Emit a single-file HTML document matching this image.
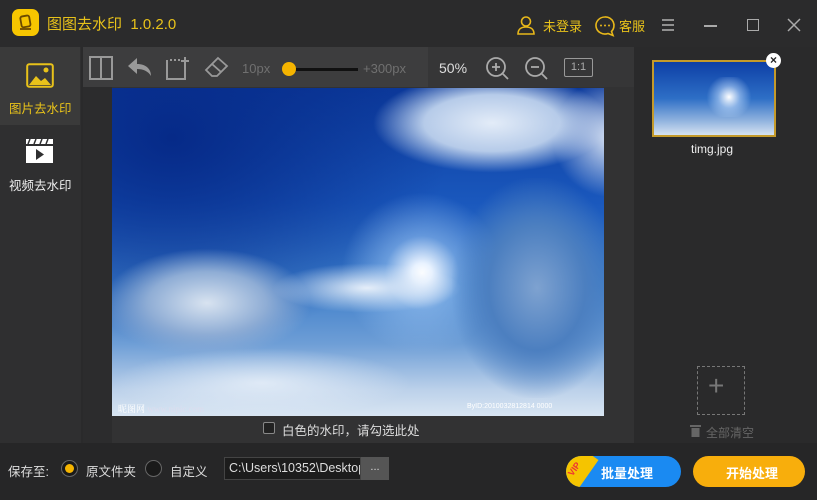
<!DOCTYPE html>
<html><head><meta charset="utf-8"><style>
*{margin:0;padding:0;box-sizing:border-box}
body{width:817px;height:500px;overflow:hidden;background:#2a2a2b;font-family:"Liberation Sans","Noto Sans CJK SC",sans-serif;position:relative;color:#ddd}
.abs{position:absolute}
.y{color:#e8c21a}
</style></head><body>
<div class="abs" style="left:0;top:0;width:817px;height:47px;background:#2b2b2c"></div>
<div class="abs" style="left:12px;top:9px;width:27px;height:27px;border-radius:7px;background:#f7c600"></div>
<svg class="abs" style="left:16px;top:13px" width="19" height="19"><rect x="5" y="3" width="9" height="11" rx="2" fill="none" stroke="#6b4a00" stroke-width="1.8" transform="rotate(-10 9 9)"/><line x1="4" y1="16" x2="15" y2="16" stroke="#6b4a00" stroke-width="1.8"/></svg>
<div class="abs y" style="left:47px;top:13px;font-size:15px">图图去水印&nbsp; 1.0.2.0</div>
<svg class="abs" style="left:516px;top:15px" width="20" height="20"><circle cx="10" cy="6.5" r="4.5" fill="none" stroke="#e8b81a" stroke-width="1.6"/><path d="M2 19c0-5 3.5-7 8-7s8 2 8 7z" fill="none" stroke="#e8b81a" stroke-width="1.6"/></svg>
<div class="abs y" style="left:543px;top:16px;font-size:13px">未登录</div>
<svg class="abs" style="left:594px;top:15px" width="22" height="22"><path d="M11 2a9 8.5 0 1 0 3 16.5l5 2-1.5-4A8.5 8.5 0 0 0 11 2z" fill="none" stroke="#e8b81a" stroke-width="1.6"/><circle cx="7" cy="10.5" r="1" fill="#e8b81a"/><circle cx="11" cy="10.5" r="1" fill="#e8b81a"/><circle cx="15" cy="10.5" r="1" fill="#e8b81a"/></svg>
<div class="abs y" style="left:619px;top:16px;font-size:13px">客服</div>
<svg class="abs" style="left:660px;top:18px" width="16" height="14" stroke="#aaa" stroke-width="1.6"><line x1="2" y1="2" x2="14" y2="2"/><line x1="2" y1="7" x2="14" y2="7"/><line x1="2" y1="12" x2="14" y2="12"/></svg>
<div class="abs" style="left:704px;top:25px;width:13px;height:1.5px;background:#aaa"></div>
<div class="abs" style="left:747px;top:19px;width:12px;height:12px;border:1.5px solid #aaa"></div>
<svg class="abs" style="left:787px;top:18px" width="14" height="14" stroke="#aaa" stroke-width="1.5"><line x1="1" y1="1" x2="13" y2="13"/><line x1="13" y1="1" x2="1" y2="13"/></svg>

<div class="abs" style="left:0;top:47px;width:81px;height:396px;background:#2f2f30"></div>
<div class="abs" style="left:0;top:47px;width:80px;height:78px;background:#3a3a3a"></div>
<svg class="abs" style="left:26px;top:63px" width="28" height="25"><rect x="1.2" y="1.2" width="25.6" height="22.6" rx="2" fill="none" stroke="#e8c21a" stroke-width="2"/><path d="M3 22l7-9 5 5 4-3 6 7z" fill="#e8c21a"/><circle cx="20" cy="7" r="2.5" fill="#e8c21a"/></svg>
<div class="abs y" style="left:9px;top:98px;font-size:12.5px">图片去水印</div>
<svg class="abs" style="left:25px;top:138px" width="29" height="26"><rect x="1" y="1" width="27" height="5" fill="#fff"/><rect x="1" y="8" width="27" height="17" fill="#fff"/><path d="M11 11v11l8-5.5z" fill="#2f2f30"/><path d="M5 1l-2 5M11 1l-2 5M17 1l-2 5M23 1l-2 5" stroke="#2f2f30" stroke-width="1.5"/></svg>
<div class="abs" style="left:9px;top:175px;font-size:12.5px;color:#eee">视频去水印</div>

<div class="abs" style="left:83px;top:47px;width:551px;height:40px;background:#3d3d3e"></div>
<div class="abs" style="left:428px;top:47px;width:206px;height:40px;background:#363637"></div>
<svg class="abs" style="left:89px;top:56px" width="24" height="24" stroke="#999" stroke-width="2" fill="none"><rect x="1" y="1" width="22" height="22"/><line x1="12" y1="1" x2="12" y2="23"/></svg>
<svg class="abs" style="left:127px;top:56px" width="26" height="22"><path d="M10 2L1 10l9 8v-5c6 0 11 2 14 7 0-7-5-12-14-12z" fill="#999"/></svg>
<svg class="abs" style="left:166px;top:56px" width="24" height="24" stroke="#999" stroke-width="2" fill="none"><path d="M1 4v19h18V9" /><path d="M19 1v8M15 5h8" /><path d="M4 4h10" stroke-dasharray="2 2"/></svg>
<svg class="abs" style="left:204px;top:56px" width="25" height="22" stroke="#999" stroke-width="1.8" fill="none"><path d="M14 2l9 8-10 10H8L2 14z"/><line x1="8" y1="8" x2="17" y2="16"/></svg>
<div class="abs" style="left:242px;top:61px;font-size:13px;color:#707070">10px</div>
<div class="abs" style="left:288px;top:68px;width:70px;height:3px;background:#111"></div>
<div class="abs" style="left:282px;top:62px;width:14px;height:14px;border-radius:50%;background:#f5b400"></div>
<div class="abs" style="left:363px;top:61px;font-size:13px;color:#707070">+300px</div>
<div class="abs" style="left:439px;top:60px;font-size:14px;color:#ddd">50%</div>
<svg class="abs" style="left:485px;top:56px" width="25" height="25" stroke="#aaa" stroke-width="1.8" fill="none"><circle cx="11" cy="11" r="9"/><line x1="17" y1="17" x2="23" y2="23"/><line x1="7" y1="11" x2="15" y2="11"/><line x1="11" y1="7" x2="11" y2="15"/></svg>
<svg class="abs" style="left:524px;top:56px" width="25" height="25" stroke="#aaa" stroke-width="1.8" fill="none"><circle cx="11" cy="11" r="9"/><line x1="17" y1="17" x2="23" y2="23"/><line x1="7" y1="11" x2="15" y2="11"/></svg>
<div class="abs" style="left:564px;top:58px;width:29px;height:19px;border:1.5px solid #999;border-radius:2px;font-size:11px;color:#aaa;text-align:center;line-height:16px">1:1</div>

<div class="abs" style="left:83px;top:87px;width:551px;height:356px;background:#323233"></div>
<div class="abs" style="left:83px;top:87px;width:29px;height:356px;background:#2c2c2d"></div>
<div class="abs" style="left:112px;top:88px;width:492px;height:328px;overflow:hidden;background:linear-gradient(180deg,#0c3a9c 0%,#1a58bd 35%,#3b7cc9 60%,#6e9ed6 78%,#bcd1ea 92%,#d8e5f2 100%)">
 <div class="abs" style="left:-60px;top:-40px;width:400px;height:300px;background:radial-gradient(ellipse at 30% 30%,#062a88,transparent 70%)"></div>
 <div class="abs" style="left:220px;top:100px;width:180px;height:170px;background:radial-gradient(circle at 50% 50%,#fff 0,#e8f2ff 8%,rgba(160,200,245,.5) 30%,transparent 65%)"></div>
 <div class="abs" style="left:260px;top:-15px;width:240px;height:100px;background:radial-gradient(ellipse,#e3ecf8 0,#b6cbe9 40%,transparent 70%)"></div>
 <div class="abs" style="left:440px;top:-10px;width:120px;height:120px;background:radial-gradient(ellipse,#dfe8f6 0,transparent 70%)"></div>
 <div class="abs" style="left:340px;top:90px;width:170px;height:220px;background:radial-gradient(ellipse,#7ea2d0 0,#4c7fc0 40%,transparent 72%)"></div>
 <div class="abs" style="left:-10px;top:160px;width:210px;height:110px;background:radial-gradient(ellipse,#d8e3f0 0,#8fadd5 40%,transparent 70%)"></div>
 <div class="abs" style="left:160px;top:175px;width:190px;height:50px;background:radial-gradient(ellipse,#e5eef9 0,transparent 70%)"></div>
 <div class="abs" style="left:0;top:260px;width:300px;height:70px;background:radial-gradient(ellipse,rgba(235,242,250,.8) 0,transparent 70%)"></div>
 <div class="abs" style="left:6px;top:314px;font-size:9px;color:#fff;font-family:'Liberation Serif','Noto Serif CJK SC',serif">昵图网 <span style="color:#dde">www.nipic.com</span></div>
 <div class="abs" style="left:355px;top:315px;font-size:7px;color:#fff">ByID:2010032812814 0000</div>
</div>
<div class="abs" style="left:263px;top:422px;width:12px;height:12px;border:1px solid #888;border-radius:2px;background:#222"></div>
<div class="abs" style="left:282px;top:420px;font-size:12.5px;color:#ddd">白色的水印，请勾选此处</div>

<div class="abs" style="left:652px;top:60px;width:124px;height:77px;border:2px solid #c49a2a;background:linear-gradient(180deg,#0d3fa6,#2e6fc6 50%,#8fb2de 80%,#d5e2f1)"><div class="abs" style="left:50px;top:15px;width:50px;height:40px;background:radial-gradient(circle,#fff 0,rgba(200,225,255,.5) 35%,transparent 70%)"></div></div>
<div class="abs" style="left:766px;top:53px;width:15px;height:15px;border-radius:50%;background:#fff;color:#222;font-size:12px;line-height:14px;text-align:center;font-weight:bold">×</div>
<div class="abs" style="left:691px;top:142px;font-size:12px;color:#eee">timg.jpg</div>
<div class="abs" style="left:697px;top:366px;width:48px;height:49px;border:1px dashed #777"></div>
<div class="abs" style="left:708px;top:370px;font-size:28px;color:#777;font-weight:300">+</div>
<svg class="abs" style="left:690px;top:424px" width="11" height="13"><rect x="0" y="1" width="11" height="2" fill="#666"/><rect x="1.5" y="4" width="8" height="9" fill="#666"/></svg>
<div class="abs" style="left:706px;top:424px;font-size:12px;color:#666">全部清空</div>

<div class="abs" style="left:0;top:443px;width:817px;height:57px;background:#262627"></div>
<div class="abs" style="left:8px;top:461px;font-size:12.5px;color:#ddd">保存至:</div>
<div class="abs" style="left:61px;top:460px;width:17px;height:17px;border-radius:50%;border:1px solid #666;background:#1a1a1a"></div>
<div class="abs" style="left:65px;top:464px;width:9px;height:9px;border-radius:50%;background:#f5b400"></div>
<div class="abs" style="left:86px;top:461px;font-size:12.5px;color:#ddd">原文件夹</div>
<div class="abs" style="left:145px;top:460px;width:17px;height:17px;border-radius:50%;border:1px solid #666;background:#1a1a1a"></div>
<div class="abs" style="left:170px;top:461px;font-size:12.5px;color:#ddd">自定义</div>
<div class="abs" style="left:224px;top:457px;width:137px;height:23px;background:#1c1c1c;border:1px solid #444;overflow:hidden;white-space:nowrap;font-size:12.5px;color:#ddd;padding:3px 4px">C:\Users\10352\Desktop</div>
<div class="abs" style="left:361px;top:457px;width:28px;height:23px;background:#555;color:#ddd;font-size:11px;text-align:center;line-height:20px">...</div>
<div class="abs" style="left:566px;top:456px;width:115px;height:31px;border-radius:16px;background:#1a8af2;overflow:hidden"><div class="abs" style="left:-12px;top:-10px;width:30px;height:60px;background:#f5c400;transform:rotate(35deg)"></div><div class="abs" style="left:1px;top:8px;font-size:9px;color:#e33;transform:rotate(-55deg);font-weight:bold">VIP</div></div>
<div class="abs" style="left:601px;top:463px;font-size:13px;color:#fff;font-weight:bold">批量处理</div>
<div class="abs" style="left:693px;top:456px;width:112px;height:31px;border-radius:16px;background:#f8ae0c"></div>
<div class="abs" style="left:726px;top:463px;font-size:13px;color:#fff;font-weight:bold">开始处理</div>
</body></html>
